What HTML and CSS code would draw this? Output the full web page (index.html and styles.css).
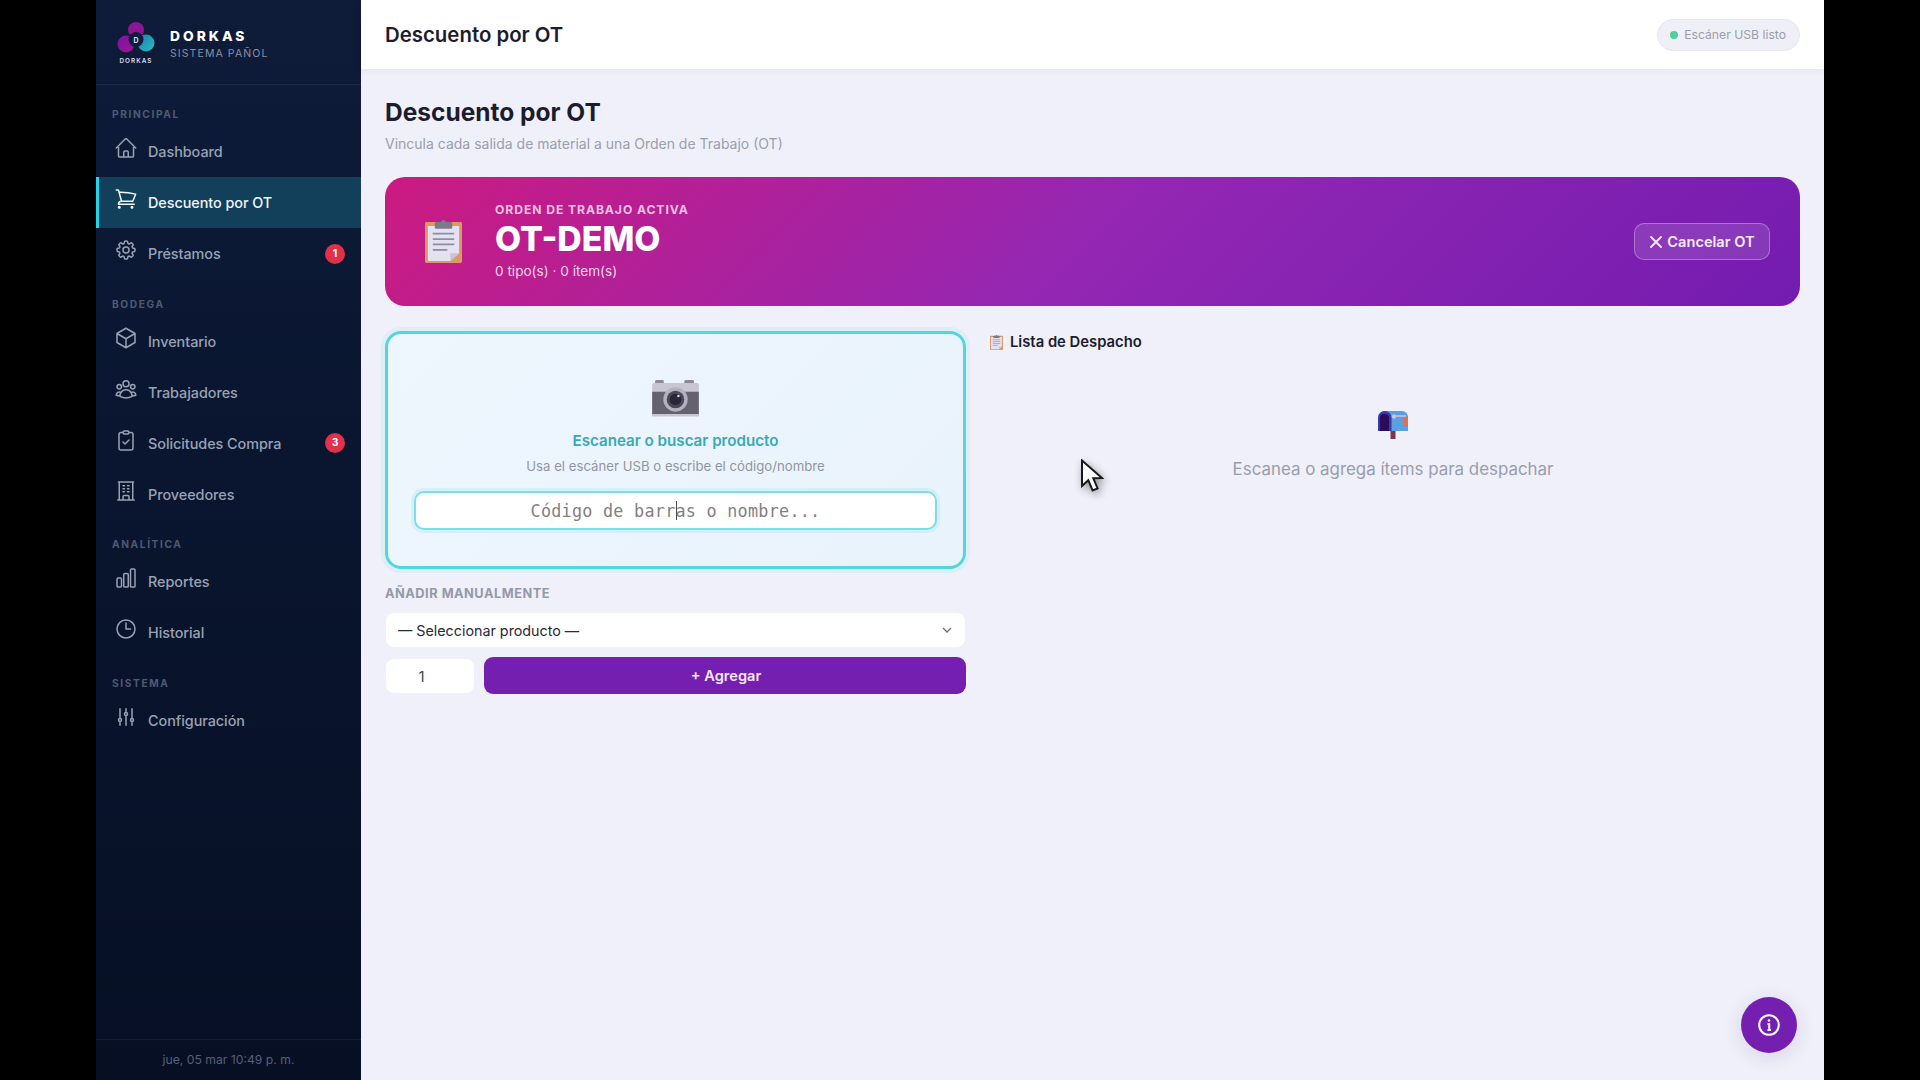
FILE: index.html
```html
<!DOCTYPE html>
<html lang="es">
<head>
<meta charset="utf-8">
<title>Descuento por OT</title>
<link rel="stylesheet" href="styles.css">
</head>
<body>
<svg class="defs" width="0" height="0" aria-hidden="true">
  <defs>
    <symbol id="clip" viewBox="0 0 38 44">
      <rect x="0" y="2" width="38" height="42" rx="1.5" fill="#dc9a62"/>
      <path d="M3 6h32v28l-9 8H3z" fill="#e4e2f2"/>
      <path d="M26 42v-8h9z" fill="#c9c3d8"/>
      <rect x="10" y="2" width="18" height="7" rx="1.5" fill="#7d7a88"/>
      <circle cx="19" cy="2.5" r="2.5" fill="#7d7a88"/>
      <path d="M8 14h22M8 19.500h22M8 25h22M8 30.500h15" stroke="#8f8da3" stroke-width="1.800"/>
    </symbol>
  </defs>
</svg>
<div class="app">
  <aside class="sidebar">
    <div class="brand">
      <svg class="logo" viewBox="0 0 38 44">
        <defs>
          <linearGradient id="lg1" x1="0" y1="0" x2="1" y2="1"><stop offset="0" stop-color="#7b14a8"/><stop offset="1" stop-color="#a0148c"/></linearGradient>
          <linearGradient id="lg2" x1="0" y1="0" x2="1" y2="1"><stop offset="0" stop-color="#1c7fa8"/><stop offset="1" stop-color="#2fb8c8"/></linearGradient>
        </defs>
        <circle cx="19" cy="9" r="8" fill="#8c1694"/>
        <circle cx="9" cy="23" r="8.500" fill="url(#lg1)"/>
        <circle cx="29" cy="22" r="8.500" fill="url(#lg2)"/>
        <circle cx="19" cy="18.500" r="7.500" fill="#0e1e3c"/>
        <text class="logo-d" x="19" y="21.500" text-anchor="middle">D</text>
        <text class="logo-word" x="19" y="42" text-anchor="middle">DORKAS</text>
      </svg>
      <div class="brand-text">
        <div class="brand-name">DORKAS</div>
        <div class="brand-sub">SISTEMA PAÑOL</div>
      </div>
    </div>
    <nav class="nav">
      <div class="nav-label">PRINCIPAL</div>
      <a class="nav-item"><svg class="nav-icon" viewBox="0 0 24 24"><path d="M2.250 12l8.954-8.955c.44-.439 1.152-.439 1.591 0L21.750 12M4.500 9.750v10.125c0 .621.504 1.125 1.125 1.125H9.750v-4.875c0-.621.504-1.125 1.125-1.125h2.250c.621 0 1.125.504 1.125 1.125V21h4.125c.621 0 1.125-.504 1.125-1.125V9.750M8.250 21h8.250"/></svg><span>Dashboard</span></a>
      <a class="nav-item active"><svg class="nav-icon" viewBox="0 0 24 24"><path d="M2.250 3h1.386c.51 0 .955.343 1.087.835l.383 1.437M7.500 14.250a3 3 0 00-3 3h15.750m-12.750-3h11.218c1.121-2.300 2.100-4.684 2.924-7.138a60.114 60.114 0 00-16.536-1.840M7.500 14.250L5.106 5.272M6 20.250a.75.75 0 11-1.500 0 .75.75 0 011.500 0zm12.750 0a.75.75 0 11-1.500 0 .75.75 0 011.500 0z"/></svg><span>Descuento por OT</span></a>
      <a class="nav-item"><svg class="nav-icon" viewBox="0 0 24 24"><path d="M10.343 3.940c.09-.542.56-.94 1.110-.94h1.093c.55 0 1.020.398 1.110.94l.149.894c.07.424.384.764.78.93.398.164.855.142 1.205-.108l.737-.527a1.125 1.125 0 011.450.12l.773.774c.39.389.44 1.002.12 1.450l-.527.737c-.25.35-.272.806-.107 1.204.165.397.505.71.93.78l.893.15c.543.09.94.56.94 1.109v1.094c0 .55-.397 1.020-.94 1.110l-.893.149c-.425.07-.765.383-.93.78-.165.398-.143.854.107 1.204l.527.738c.32.447.269 1.060-.12 1.450l-.774.773a1.125 1.125 0 01-1.449.12l-.738-.527c-.35-.25-.806-.272-1.203-.107-.397.165-.71.505-.781.929l-.149.894c-.09.542-.56.94-1.110.94h-1.094c-.55 0-1.019-.398-1.110-.94l-.148-.894c-.071-.424-.384-.764-.781-.93-.398-.164-.854-.142-1.204.108l-.738.527c-.447.32-1.060.269-1.450-.12l-.773-.774a1.125 1.125 0 01-.12-1.450l.527-.737c.25-.35.273-.806.108-1.204-.165-.397-.505-.71-.93-.78l-.894-.15c-.542-.09-.94-.56-.94-1.110v-1.094c0-.55.398-1.020.94-1.110l.894-.149c.424-.07.765-.383.93-.78.165-.398.143-.854-.107-1.204l-.527-.738a1.125 1.125 0 01.12-1.450l.773-.773a1.125 1.125 0 011.450-.12l.737.527c.35.25.807.272 1.204.107.397-.165.71-.505.78-.929l.15-.894zM15 12a3 3 0 11-6 0 3 3 0 016 0z"/></svg><span>Préstamos</span><b class="badge">1</b></a>

      <div class="nav-label section">BODEGA</div>
      <a class="nav-item"><svg class="nav-icon" viewBox="0 0 24 24"><path d="M21 7.500l-9-5.250L3 7.500m18 0l-9 5.250m9-5.250v9l-9 5.250M3 7.500l9 5.250M3 7.500v9l9 5.250m0-9v9"/></svg><span>Inventario</span></a>
      <a class="nav-item"><svg class="nav-icon" viewBox="0 0 24 24"><path d="M18 18.720a9.094 9.094 0 003.741-.479 3 3 0 00-4.682-2.720m.94 3.198l.001.031c0 .225-.012.447-.037.666A11.944 11.944 0 0112 21c-2.170 0-4.207-.576-5.963-1.584A6.062 6.062 0 016 18.719m12 0a5.971 5.971 0 00-.941-3.197m0 0A5.995 5.995 0 0012 12.750a5.995 5.995 0 00-5.058 2.772m0 0a3 3 0 00-4.681 2.720 8.986 8.986 0 003.740.477m.94-3.197a5.971 5.971 0 00-.94 3.197M15 6.750a3 3 0 11-6 0 3 3 0 016 0zm6 3a2.250 2.250 0 11-4.500 0 2.250 2.250 0 014.500 0zm-13.500 0a2.250 2.250 0 11-4.500 0 2.250 2.250 0 014.500 0z"/></svg><span>Trabajadores</span></a>
      <a class="nav-item"><svg class="nav-icon" viewBox="0 0 24 24"><path d="M9 4.500H7a2 2 0 00-2 2V20a2 2 0 002 2h10a2 2 0 002-2V6.500a2 2 0 00-2-2h-2M9 4.500A1.500 1.500 0 0010.500 6h3A1.500 1.500 0 0015 4.500M9 4.500A1.500 1.500 0 0110.500 3h3A1.500 1.500 0 0115 4.500M9 14l2 2 4-4"/></svg><span>Solicitudes Compra</span><b class="badge">3</b></a>
      <a class="nav-item"><svg class="nav-icon" viewBox="0 0 24 24"><path d="M3.750 21h16.500M4.500 3h15M5.250 3v18m13.500-18v18M9 6.750h1.500m-1.500 3h1.500m-1.500 3h1.500m3-6H15m-1.500 3H15m-1.500 3H15M9 21v-3.375c0-.621.504-1.125 1.125-1.125h3.750c.621 0 1.125.504 1.125 1.125V21"/></svg><span>Proveedores</span></a>

      <div class="nav-label section">ANALÍTICA</div>
      <a class="nav-item"><svg class="nav-icon" viewBox="0 0 24 24"><path d="M3 13.125C3 12.504 3.504 12 4.125 12h2.250c.621 0 1.125.504 1.125 1.125v6.750C7.500 20.496 6.996 21 6.375 21h-2.250A1.125 1.125 0 013 19.875v-6.750zM9.750 8.625c0-.621.504-1.125 1.125-1.125h2.250c.621 0 1.125.504 1.125 1.125v11.250c0 .621-.504 1.125-1.125 1.125h-2.250a1.125 1.125 0 01-1.125-1.125V8.625zM16.500 4.125c0-.621.504-1.125 1.125-1.125h2.250C20.496 3 21 3.504 21 4.125v15.750c0 .621-.504 1.125-1.125 1.125h-2.250a1.125 1.125 0 01-1.125-1.125V4.125z"/></svg><span>Reportes</span></a>
      <a class="nav-item"><svg class="nav-icon" viewBox="0 0 24 24"><path d="M12 6v6h4.500m4.500 0a9 9 0 11-18 0 9 9 0 0118 0z"/></svg><span>Historial</span></a>

      <div class="nav-label section">SISTEMA</div>
      <a class="nav-item"><svg class="nav-icon" viewBox="0 0 24 24"><path d="M6 13.500V3.750m0 9.750a1.500 1.500 0 010 3m0-3a1.500 1.500 0 000 3m0 3.750V16.500m12-3V3.750m0 9.750a1.500 1.500 0 010 3m0-3a1.500 1.500 0 000 3m0 3.750V16.500m-6-9V3.750m0 3.750a1.500 1.500 0 010 3m0-3a1.500 1.500 0 000 3m0 9.750V10.500"/></svg><span>Configuración</span></a>
    </nav>
    <div class="side-foot">jue, 05 mar 10:49 p. m.</div>
  </aside>

  <div class="main">
    <header class="topbar">
      <div class="top-title">Descuento por OT</div>
      <div class="status"><i class="dot"></i>Escáner USB listo</div>
    </header>
    <main class="content">
      <h1 class="page-title">Descuento por OT</h1>
      <p class="page-sub">Vincula cada salida de material a una Orden de Trabajo (OT)</p>

      <section class="banner">
        <svg class="banner-icon"><use href="#clip"/></svg>
        <div class="banner-text">
          <div class="banner-label">ORDEN DE TRABAJO ACTIVA</div>
          <div class="banner-code">OT-DEMO</div>
          <div class="banner-meta">0 tipo(s) · 0 ítem(s)</div>
        </div>
        <button class="cancel"><svg class="cancel-x" viewBox="0 0 14 14"><path d="M2 2l10 10M12 2L2 12"/></svg>Cancelar OT</button>
      </section>

      <div class="columns">
        <div class="left">
          <section class="scan">
            <svg class="camera" viewBox="0 0 48 38">
              <rect x="3" y="0" width="9" height="6" rx="1.500" fill="#8d8a98"/>
              <rect x="33" y="0" width="10" height="6" rx="1.500" fill="#8d8a98"/>
              <path d="M2 3h44a2 2 0 012 2v8H0V5a2 2 0 012-2z" fill="#c9c6d4"/>
              <path d="M0 12h48v23a2 2 0 01-2 2H2a2 2 0 01-2-2z" fill="#65626f"/>
              <rect x="0" y="35" width="48" height="2.500" rx="1" fill="#c9c6d4"/>
              <circle cx="24" cy="20" r="12.500" fill="#b4b1bf"/>
              <circle cx="24" cy="20" r="9" fill="#4b4858"/>
              <circle cx="24" cy="20" r="6" fill="#2a2838"/>
              <circle cx="27" cy="16.500" r="1.300" fill="#d6d4e0"/>
            </svg>
            <div class="scan-title">Escanear o buscar producto</div>
            <div class="scan-sub">Usa el escáner USB o escribe el código/nombre</div>
            <div class="scan-field">
              <input class="scan-input" type="text" placeholder="Código de barras o nombre...">
              <i class="caret"></i>
            </div>
          </section>

          <div class="manual-label">AÑADIR MANUALMENTE</div>
          <div class="select-wrap">
            <select class="select"><option>— Seleccionar producto —</option></select>
            <svg class="chevron" viewBox="0 0 12 12"><path d="M2 4l4 4 4-4"/></svg>
          </div>
          <div class="add-row">
            <input class="qty" type="text" value="1">
            <button class="add">+ Agregar</button>
          </div>
        </div>

        <div class="right">
          <div class="list-title"><svg class="list-icon"><use href="#clip"/></svg>Lista de Despacho</div>
          <div class="empty">
            <svg class="mailbox" viewBox="0 0 30 30">
              <rect x="12.500" y="20" width="5" height="10" fill="#7a3a4a"/>
              <path d="M7 2h17a6 6 0 016 6v14H2V7a5 5 0 015-5z" fill="#5a9fe0"/>
              <path d="M7 2a6.500 6.500 0 016.500 6.500V22H0V8.500A6.500 6.500 0 017 2z" fill="#2f3ea8"/>
              <path d="M7 5a4 4 0 014 4v13H2V9a4 4 0 014-4z" fill="#2c0a5c"/>
              <path d="M15 7h13" stroke="#b9b6d8" stroke-width="2"/>
              <circle cx="16" cy="7.500" r="2.200" fill="#c0c4e8"/>
              <rect x="25.500" y="8" width="4" height="9" fill="#f26a3d"/>
            </svg>
            <div class="empty-text">Escanea o agrega ítems para despachar</div>
          </div>
        </div>
      </div>
    </main>
    <button class="fab"><svg class="fab-icon" viewBox="0 0 24 24"><circle cx="12" cy="12" r="9.800"/><path d="M10.500 11H12.200V17M10.500 17H14"/><circle class="fab-dot" cx="12" cy="7.500" r="1.300"/></svg></button>
  </div>
</div>
<svg class="cursor" viewBox="0 0 24 34"><path d="M2 1.500v25.500l6.300-5.800 4.300 10.300 5-2.100-4.300-10.100 8.700-.2z"/></svg>
</body>
</html>
```

FILE: styles.css
```css
* { box-sizing: border-box; }
html, body { height: 100%; }
body {
  margin: 0;
  background: #000;
  font-family: Inter, "Noto Sans", sans-serif;
  overflow: hidden;
}
.defs { position: absolute; }
.app {
  display: flex;
  width: 1728px;
  height: 1080px;
  margin: 0 auto;
}

/* sidebar */
.sidebar {
  width: 265px;
  flex: none;
  display: flex;
  flex-direction: column;
  background: linear-gradient(180deg, #0e1c3a 0%, #0a1630 40%, #060f24 100%);
}
.brand {
  height: 85px;
  flex: none;
  display: flex;
  align-items: center;
  gap: 15px;
  padding: 1px 0 0 21px;
  border-bottom: 1px solid rgba(255,255,255,.07);
}
.logo { width: 38px; height: 44px; flex: none; }
.logo-d { font: 700 7px Inter, sans-serif; fill: #d9dcec; }
.logo-word { font: 600 6.300px Inter, sans-serif; letter-spacing: 1.100px; fill: #d9dcec; }
.brand-text { margin-top: 5px; }
.brand-name { font-size: 13.800px; font-weight: 800; letter-spacing: 3px; color: #fff; line-height: 17px; }
.brand-sub { font-size: 10.500px; letter-spacing: 1.100px; color: #8790a6; line-height: 17px; }

.nav { flex: 1; padding-top: 20px; }
.nav-label {
  height: 18px;
  margin: 0 0 3px 16px;
  font-size: 10.200px;
  font-weight: 700;
  letter-spacing: 1.600px;
  line-height: 18px;
  color: #4f5a72;
}
.nav-label.section { margin-top: 15.500px; }
.nav-item {
  display: flex;
  align-items: center;
  height: 51px;
  padding: 0 16px 0 18px;
  gap: 10px;
  font-size: 14.400px;
  font-weight: 500;
  letter-spacing: -.05px;
  color: #99a2b4;
}
.nav-item.active {
  background: #123f5a;
  color: #f0f6fb;
  padding-left: 15px;
  border-left: 3px solid #22d3ee;
}
.nav-icon {
  width: 24px;
  height: 24px;
  flex: none;
  margin-bottom: 7px;
  fill: none;
  stroke: currentColor;
  stroke-width: 1.500;
  stroke-linecap: round;
  stroke-linejoin: round;
}
.badge {
  margin-left: auto;
  width: 20px;
  height: 20px;
  border-radius: 50%;
  background: #e0304a;
  color: #fff;
  font-size: 10.500px;
  font-weight: 700;
  line-height: 20px;
  text-align: center;
}
.side-foot {
  height: 41px;
  flex: none;
  border-top: 1px solid rgba(255,255,255,.07);
  text-align: center;
  font-size: 12.200px;
  line-height: 39px;
  color: #566078;
}

/* main */
.main {
  flex: 1;
  position: relative;
  display: flex;
  flex-direction: column;
  background: #eff0f9;
}
.topbar {
  height: 69px;
  flex: none;
  display: flex;
  align-items: center;
  justify-content: space-between;
  padding: 0 24px;
  background: #fff;
  box-shadow: 0 2px 8px rgba(30,30,70,.05);
}
.top-title { font-size: 20.400px; font-weight: 600; color: #1c1c2e; }
.status {
  display: flex;
  align-items: center;
  gap: 6px;
  height: 32px;
  padding: 0 13px 0 12px;
  border: 1px solid #e6e7f0;
  border-radius: 16px;
  background: #eff0f7;
  font-size: 12.200px;
  color: #9a9dac;
}
.dot { width: 8px; height: 8px; border-radius: 50%; background: #4fcf9b; }

.content { flex: 1; padding: 25px 24px 0; }
.page-title { margin: 0; font-size: 24.500px; font-weight: 700; line-height: 36px; color: #1c1c2e; }
.page-sub { margin: 4px 0 0; font-size: 14px; line-height: 20px; color: #9b9eae; }

.banner {
  height: 129px;
  margin-top: 23px;
  display: flex;
  align-items: center;
  padding: 0 30px 0 40px;
  border-radius: 20px;
  background: linear-gradient(135deg, #cc1a80 0%, #9327b3 50%, #731cb0 100%);
}
.banner-icon { width: 37px; height: 43px; flex: none; }
.banner-text { margin-left: 33px; flex: 1; }
.banner-label { font-size: 12.200px; font-weight: 700; letter-spacing: .9px; line-height: 16px; color: rgba(255,255,255,.72); }
.banner-code { font-size: 33.800px; font-weight: 800; line-height: 42px; color: #fff; }
.banner-meta { margin-top: 1px; font-size: 13.600px; line-height: 20px; color: rgba(255,255,255,.82); }
.cancel {
  display: flex;
  align-items: center;
  justify-content: center;
  gap: 4px;
  width: 136px;
  height: 37px;
  padding: 0;
  border: 1px solid rgba(255,255,255,.3);
  border-radius: 10px;
  background: rgba(255,255,255,.12);
  font: 600 14.600px Inter, sans-serif;
  color: #f6ecfb;
}
.cancel-x { width: 14px; height: 14px; fill: none; stroke: currentColor; stroke-width: 1.800; stroke-linecap: round; }

.columns {
  margin-top: 25px;
  display: grid;
  grid-template-columns: 581px 1fr;
  gap: 22px;
}
.scan {
  height: 238px;
  display: flex;
  flex-direction: column;
  align-items: center;
  padding: 46px 26px 0;
  border: 3px solid #52d6e0;
  border-radius: 16px;
  background: linear-gradient(135deg, #eef6fe, #e9f3fc);
  box-shadow: 0 0 0 4px rgba(60,210,225,.09);
}
.camera { width: 47px; height: 37px; flex: none; }
.scan-title { margin-top: 13px; font-size: 15.150px; font-weight: 600; line-height: 22px; color: #37aab5; }
.scan-sub { margin-top: 4px; font-size: 13.200px; line-height: 20px; color: #91959f; }
.scan-field { position: relative; width: 100%; margin-top: 15px; }
.scan-input {
  display: block;
  width: 100%;
  height: 39px;
  border: 2px solid #7adfe8;
  border-radius: 10px;
  background: #fff;
  box-shadow: 0 0 0 3px rgba(60,210,225,.13);
  outline: none;
  text-align: center;
  font: 16.800px "DejaVu Sans Mono", monospace;
  letter-spacing: .25px;
}
.scan-input::placeholder { color: #85807f; opacity: 1; }
.caret {
  position: absolute;
  left: 50%;
  top: 10px;
  width: 1px;
  height: 19px;
  background: #4a4a55;
}
.manual-label { margin-top: 16px; font-size: 12.800px; font-weight: 700; letter-spacing: .5px; line-height: 18px; color: #9499a8; }
.select-wrap { position: relative; margin-top: 9px; }
.select {
  display: block;
  width: 100%;
  height: 36px;
  padding: 0 12px;
  appearance: none;
  border: 1px solid #f0f1f8;
  border-radius: 9px;
  background: #fff;
  font: 14.300px Inter, sans-serif;
  color: #2a2a38;
}
.chevron {
  position: absolute;
  right: 13px;
  top: 12px;
  width: 12px;
  height: 12px;
  fill: none;
  stroke: #6a6d78;
  stroke-width: 1.300;
}
.add-row { display: flex; gap: 9px; margin-top: 9px; }
.qty {
  width: 90px;
  height: 36px;
  margin-top: 1px;
  padding: 0 17px 0 0;
  border: 1px solid #f0f1f8;
  border-radius: 9px;
  background: #fff;
  text-align: center;
  font: 15px Inter, sans-serif;
  color: #44444f;
}
.add {
  flex: 1;
  height: 37px;
  padding: 0 0 0 2px;
  border: 0;
  border-radius: 9px;
  background: #741fb0;
  font: 600 14.600px Inter, sans-serif;
  color: #f5e6fa;
}
.list-title {
  display: flex;
  align-items: center;
  gap: 7px;
  margin-top: 1px;
  padding-left: 2px;
  height: 20px;
  font-size: 14.800px;
  font-weight: 600;
  color: #1c1c2e;
}
.list-icon { width: 13px; height: 15px; flex: none; }
.empty { display: flex; flex-direction: column; align-items: center; margin-top: 57px; padding-right: 2px; }
.mailbox { width: 30px; height: 30px; }
.empty-text { margin-top: 18px; font-size: 16.900px; line-height: 24px; color: #9a9dac; }

.fab {
  position: absolute;
  right: 27px;
  bottom: 27px;
  width: 56px;
  height: 56px;
  padding: 0;
  display: flex;
  align-items: center;
  justify-content: center;
  border: 0;
  border-radius: 50%;
  background: #741fb0;
  box-shadow: 0 4px 20px rgba(80,40,140,.14);
}
.fab-icon { width: 24px; height: 24px; fill: none; stroke: #fff; stroke-width: 2; }
.fab-dot { fill: #fff; stroke: none; }
.cursor {
  position: absolute;
  left: 1080px;
  top: 459px;
  width: 24px;
  height: 34px;
  fill: #fff;
  stroke: #17171c;
  stroke-width: 2;
  filter: drop-shadow(2px 3px 4px rgba(0,0,0,.4));
}
```
